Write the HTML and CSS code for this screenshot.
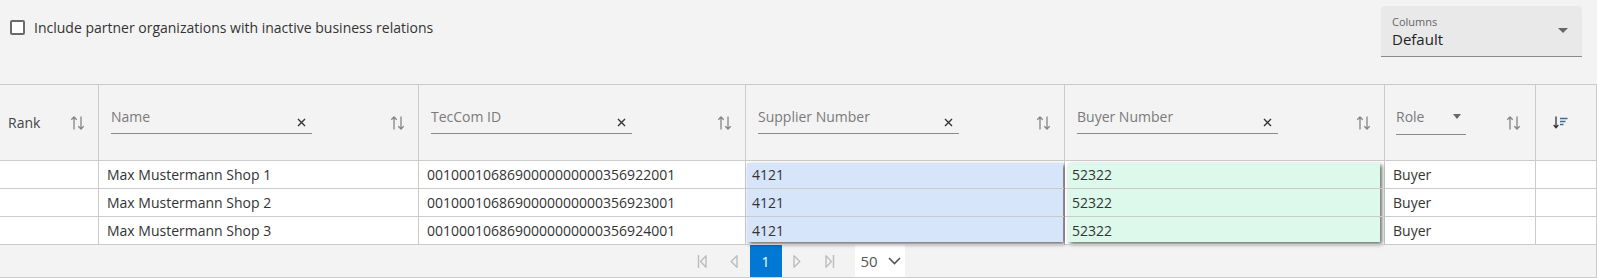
FILE: index.html
```html
<!DOCTYPE html>
<html>
<head>
<meta charset="utf-8">
<link rel="stylesheet" href="styles.css">
</head>
<body>
<div class="toolbar">
  <label class="check"><span class="box"></span><span class="check-text">Include partner organizations with inactive business relations</span></label>
  <div class="colsel">
    <div class="colsel-text"><span class="colsel-label">Columns</span><span class="colsel-value">Default</span></div>
    <span class="tri"></span>
  </div>
</div>
<div class="grid">
  <div class="head">
    <div class="hcell c1 rank"><span class="htitle">Rank</span>
      <svg class="sort" width="15" height="14" viewBox="0 0 15 14"><path d="M4 13.5V1M1.3 3.7L4 1l2.7 2.7M11 0.5V13M8.3 10.3L11 13l2.7-2.7" stroke="#858585" stroke-width="1.3" fill="none"/></svg>
    </div>
    <div class="hcell c2">
      <div class="filter"><span class="ph">Name</span><svg class="clr" width="9" height="9" viewBox="0 0 9 9"><path d="M1 1l7 7M8 1L1 8" stroke="#333" stroke-width="1.4"/></svg></div>
      <svg class="sort" width="15" height="14" viewBox="0 0 15 14"><path d="M4 13.5V1M1.3 3.7L4 1l2.7 2.7M11 0.5V13M8.3 10.3L11 13l2.7-2.7" stroke="#858585" stroke-width="1.3" fill="none"/></svg>
    </div>
    <div class="hcell c3">
      <div class="filter"><span class="ph">TecCom ID</span><svg class="clr" width="9" height="9" viewBox="0 0 9 9"><path d="M1 1l7 7M8 1L1 8" stroke="#333" stroke-width="1.4"/></svg></div>
      <svg class="sort" width="15" height="14" viewBox="0 0 15 14"><path d="M4 13.5V1M1.3 3.7L4 1l2.7 2.7M11 0.5V13M8.3 10.3L11 13l2.7-2.7" stroke="#858585" stroke-width="1.3" fill="none"/></svg>
    </div>
    <div class="hcell c4">
      <div class="filter"><span class="ph">Supplier Number</span><svg class="clr" width="9" height="9" viewBox="0 0 9 9"><path d="M1 1l7 7M8 1L1 8" stroke="#333" stroke-width="1.4"/></svg></div>
      <svg class="sort" width="15" height="14" viewBox="0 0 15 14"><path d="M4 13.5V1M1.3 3.7L4 1l2.7 2.7M11 0.5V13M8.3 10.3L11 13l2.7-2.7" stroke="#858585" stroke-width="1.3" fill="none"/></svg>
    </div>
    <div class="hcell c5">
      <div class="filter"><span class="ph">Buyer Number</span><svg class="clr" width="9" height="9" viewBox="0 0 9 9"><path d="M1 1l7 7M8 1L1 8" stroke="#333" stroke-width="1.4"/></svg></div>
      <svg class="sort" width="15" height="14" viewBox="0 0 15 14"><path d="M4 13.5V1M1.3 3.7L4 1l2.7 2.7M11 0.5V13M8.3 10.3L11 13l2.7-2.7" stroke="#858585" stroke-width="1.3" fill="none"/></svg>
    </div>
    <div class="hcell c6 role">
      <div class="rolesel"><span class="ph">Role</span><span class="tri small"></span></div>
      <svg class="sort" width="15" height="14" viewBox="0 0 15 14"><path d="M4 13.5V1M1.3 3.7L4 1l2.7 2.7M11 0.5V13M8.3 10.3L11 13l2.7-2.7" stroke="#858585" stroke-width="1.3" fill="none"/></svg>
    </div>
    <div class="hcell c7 act">
      <svg width="16" height="13" viewBox="0 0 16 13"><path d="M3 0.5V11.5M0.7 9L3 11.7 5.3 9" stroke="#333" stroke-width="1.3" fill="none"/><path d="M7 2.5h7.5M7 5.5h5.5M7 8.5h3.5" stroke="#3f6b98" stroke-width="1.3"/></svg>
    </div>
  </div>
  <div class="body">
    <div class="col c1"><div class="cell"></div><div class="cell"></div><div class="cell"></div></div>
    <div class="col c2"><div class="cell">Max Mustermann Shop 1</div><div class="cell">Max Mustermann Shop 2</div><div class="cell">Max Mustermann Shop 3</div></div>
    <div class="col c3"><div class="cell">0010001068690000000000356922001</div><div class="cell">0010001068690000000000356923001</div><div class="cell">0010001068690000000000356924001</div></div>
    <div class="col c4 sel sel-blue"><div class="cell">4121</div><div class="cell">4121</div><div class="cell">4121</div></div>
    <div class="col c5 sel sel-green"><div class="cell">52322</div><div class="cell">52322</div><div class="cell">52322</div></div>
    <div class="col c6"><div class="cell">Buyer</div><div class="cell">Buyer</div><div class="cell">Buyer</div></div>
    <div class="col c7"><div class="cell"></div><div class="cell"></div><div class="cell"></div></div>
  </div>
  <div class="pager">
    <div class="pgroup">
      <span class="pbtn"><svg width="10" height="15" viewBox="0 0 10 15"><path d="M1.5 1v13" stroke="#bdbdbd" stroke-width="1.5"/><path d="M9 1.8L3.6 7.5 9 13.2z" stroke="#bdbdbd" stroke-width="1.4" fill="none" stroke-linejoin="round"/></svg></span>
      <span class="pbtn"><svg width="9" height="15" viewBox="0 0 9 15"><path d="M8 1.8L2.2 7.5 8 13.2z" stroke="#bdbdbd" stroke-width="1.4" fill="none" stroke-linejoin="round"/></svg></span>
      <span class="pbtn active">1</span>
      <span class="pbtn"><svg width="9" height="15" viewBox="0 0 9 15"><path d="M1 1.8l5.8 5.7L1 13.2z" stroke="#bdbdbd" stroke-width="1.4" fill="none" stroke-linejoin="round"/></svg></span>
      <span class="pbtn"><svg width="10" height="15" viewBox="0 0 10 15"><path d="M1 1.8l5.4 5.7L1 13.2z" stroke="#bdbdbd" stroke-width="1.4" fill="none" stroke-linejoin="round"/><path d="M8.5 1v13" stroke="#bdbdbd" stroke-width="1.5"/></svg></span>
      <span class="psize"><span>50</span><svg width="13" height="8" viewBox="0 0 13 8"><path d="M1 1l5.5 5.5L12 1" stroke="#555" stroke-width="1.6" fill="none"/></svg></span>
    </div>
  </div>
</div>
</body>
</html>
```

FILE: styles.css
```css
* { box-sizing: border-box; }
html, body { margin: 0; padding: 0; }
body {
  background: #f3f3f3;
  font-family: "Open Sans", "Noto Sans", sans-serif;
  font-size: 14px;
  color: #333;
  width: 1597px;
  height: 278px;
  overflow: hidden;
}
.toolbar {
  height: 84px;
  display: flex;
  justify-content: space-between;
  align-items: flex-start;
}
.check {
  display: flex;
  align-items: center;
  gap: 9px;
  margin: 17px 0 0 10px;
  line-height: 21px;
  color: #333;
}
.box {
  width: 15px;
  height: 15px;
  border: 2px solid #6b6b6b;
  border-radius: 2px;
  background: #fff;
}
.colsel {
  margin: 6px 15px 0 0;
  width: 201px;
  height: 51px;
  background: #e9e9e9;
  border-radius: 4px 4px 0 0;
  border-bottom: 1px solid #8a8a8a;
  display: flex;
  justify-content: space-between;
  align-items: flex-start;
  padding: 8px 14px 0 11px;
}
.colsel-text { display: flex; flex-direction: column; }
.colsel-label { font-size: 11px; line-height: 15px; color: #666; }
.colsel-value { font-size: 15px; line-height: 20px; color: #222; }
.tri {
  width: 0; height: 0;
  border-left: 5px solid transparent;
  border-right: 5px solid transparent;
  border-top: 5px solid #666;
  margin-top: 14px;
}
.tri.small {
  border-left-width: 4.5px;
  border-right-width: 4.5px;
  margin: 0 5px 0 0;
}
.grid {
  border-top: 1px solid #cbcbcb;
}
.head { display: flex; height: 76px; }
.c1 { width: 99px; }
.c2 { width: 320px; }
.c3 { width: 327px; }
.c4 { width: 319px; }
.c5 { width: 320px; }
.c6 { width: 151px; }
.c7 { width: 61px; }
.hcell {
  height: 76px;
  border-right: 1px solid #cbcbcb;
  border-bottom: 1px solid #cbcbcb;
  display: flex;
  align-items: center;
  justify-content: space-between;
  padding: 0 13px 0 12px;
}
.hcell.rank { padding-left: 8px; }
.hcell.role { padding-left: 11px; padding-right: 14px; }
.hcell.act { padding-left: 17px; justify-content: flex-start; }
.htitle { color: #444; }
.sort { display: block; flex: none; }
.filter {
  align-self: flex-start;
  margin-top: 16px;
  width: 201px;
  height: 33px;
  border-bottom: 1px solid #8a8a8a;
  display: flex;
  justify-content: space-between;
  padding: 6px 6px 0 0;
}
.ph { color: #7a7a7a; line-height: 20px; }
.clr { align-self: flex-end; margin-bottom: 6px; display: block; }
.rolesel {
  align-self: flex-start;
  margin-top: 16px;
  width: 70px;
  height: 34px;
  border-bottom: 1px solid #8a8a8a;
  display: flex;
  justify-content: space-between;
  align-items: center;
  padding-bottom: 2px;
}
.body { display: flex; }
.col {
  border-right: 1px solid #cbcbcb;
  background: #fff;
  position: relative;
}
.cell {
  position: relative;
  z-index: 1;
  height: 28px;
  line-height: 27px;
  border-bottom: 1px solid #cbcbcb;
  padding-left: 8px;
  white-space: nowrap;
  overflow: hidden;
}
.col.c1 .cell, .col.c7 .cell { padding-left: 0; }
.sel::before {
  content: "";
  position: absolute;
  z-index: 0;
  top: 2px;
  bottom: 3px;
  box-shadow: 2px 2px 4px rgba(0, 0, 0, 0.6);
}
.sel-blue::before { left: 1px; right: 1px; background: #d7e5fb; }
.sel-green::before { left: 3px; right: 4px; background: #ddf9ec; }
.sel-blue .cell { padding-left: 6px; }
.sel-green .cell { padding-left: 7px; }
.pager {
  height: 33px;
  border-bottom: 1px solid #cbcbcb;
  border-right: 1px solid #cbcbcb;
  display: flex;
  justify-content: center;
}
.pgroup { display: flex; align-items: stretch; margin-left: -6px; }
.pbtn {
  width: 32px;
  height: 32px;
  display: flex;
  align-items: center;
  justify-content: center;
}
.pbtn.active { background: #0078d4; color: #fff; }
.psize {
  margin-left: 9px;
  width: 50px;
  height: 32px;
  background: #fff;
  display: flex;
  align-items: center;
  gap: 10px;
  padding-left: 6px;
  color: #555;
  font-size: 15px;
}
```
